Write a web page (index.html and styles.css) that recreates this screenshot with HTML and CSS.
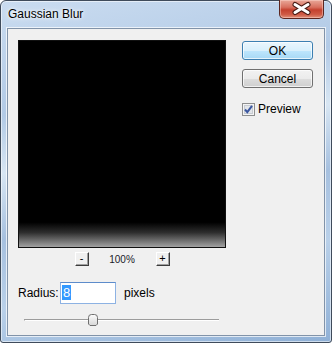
FILE: index.html
```html
<!DOCTYPE html>
<html lang="en">
<head>
    <meta charset="UTF-8">
    <title>Gaussian Blur</title>
    <link rel="stylesheet" href="styles.css">
</head>
<body>
    <div class="window">
        <div class="titlebar">
            <span class="title">Gaussian Blur</span>
            <div class="close">
                <svg width="43" height="17" viewBox="0 0 43 17">
                    <path d="M15 4.5 L28 12.5 M15 12.5 L28 4.5" stroke="#4a1c15" stroke-width="5" stroke-linecap="round"/>
                    <path d="M15 4.5 L28 12.5 M15 12.5 L28 4.5" stroke="#fff" stroke-width="3" stroke-linecap="round"/>
                </svg>
            </div>
        </div>
        <div class="client">
            <div class="main">
                <div class="preview"></div>
                <div class="zoom-row">
                    <span class="zoom-btn">-</span>
                    <span class="zoom-label">100%</span>
                    <span class="zoom-btn">+</span>
                </div>
                <div class="radius-row">
                    <span class="radius-label">Radius:</span>
                    <div class="field"><span class="sel">8</span></div>
                    <span class="unit">pixels</span>
                </div>
                <div class="slider">
                    <div class="track"></div>
                    <svg class="thumb" width="10" height="12" viewBox="0 0 10 12">
                        <defs>
                            <linearGradient id="tg" x1="0" y1="0" x2="0" y2="1">
                                <stop offset="0" stop-color="#fdfdfd"/>
                                <stop offset="1" stop-color="#d6d6d6"/>
                            </linearGradient>
                        </defs>
                        <path d="M0.5 3.5 Q0.5 0.5 3.5 0.5 H6.5 Q9.5 0.5 9.5 3.5 V10 L8 11.5 H2 L0.5 10 Z" fill="url(#tg)" stroke="#6f6f6f"/>
                    </svg>
                </div>
            </div>
            <div class="side">
                <button class="btn default">OK</button>
                <button class="btn">Cancel</button>
                <div class="check">
                    <svg width="13" height="13" viewBox="0 0 13 13">
                        <rect x="0.5" y="0.5" width="12" height="12" fill="#f4f4f4" stroke="#8e8f8f"/>
                        <rect x="2.5" y="2.5" width="8" height="8" fill="#e3e6ea" stroke="#c8ccd3"/>
                        <path d="M3 6.5 L5.3 9.2 L10 2.8" fill="none" stroke="#3b57a0" stroke-width="2"/>
                    </svg>
                    <span>Preview</span>
                </div>
            </div>
        </div>
    </div>
</body>
</html>
```

FILE: styles.css
```css
html, body {
    margin: 0;
    padding: 0;
}
body {
    width: 332px;
    height: 343px;
    overflow: hidden;
    font-family: "Liberation Sans", Arial, sans-serif;
    font-size: 12px;
    color: #000;
}
.window {
    box-sizing: border-box;
    width: 332px;
    height: 343px;
    border: 1px solid #3f4b5b;
    border-radius: 6px 6px 3px 3px;
    background: linear-gradient(168deg, #cadcf0 0%, #b2cae6 28%, #d8e6f3 42%, #a6c0df 58%, #b9d0e9 75%, #8fb0d6 100%);
    box-shadow: inset 0 0 0 1px rgba(255, 255, 255, 0.55);
    display: flex;
    flex-direction: column;
}
.titlebar {
    height: 27px;
    display: flex;
    align-items: flex-start;
    justify-content: space-between;
}
.title {
    margin: 6px 0 0 7px;
    line-height: 14px;
    text-shadow: 0 0 6px #fff, 0 0 3px #fff;
}
.close {
    box-sizing: border-box;
    width: 45px;
    height: 19px;
    margin: -1px 7px 0 0;
    border: 1px solid #5c2620;
    border-top: none;
    border-radius: 0 0 5px 5px;
    background: linear-gradient(to bottom, #e9a899 0%, #d8705f 40%, #c4412f 55%, #cf5a45 80%, #e0907a 100%);
    box-shadow: inset 0 0 0 1px rgba(255, 220, 210, 0.45);
}
.close svg {
    display: block;
}
.client {
    flex: 1;
    margin: 0 6px 6px 6px;
    border: 1px solid #8193a9;
    box-shadow: 0 0 0 1px rgba(255, 255, 255, 0.7);
    background: #f0f0f0;
    display: flex;
    padding: 11px 10px 0 10px;
}
.main {
    width: 208px;
    display: flex;
    flex-direction: column;
}
.preview {
    box-sizing: border-box;
    width: 208px;
    height: 208px;
    border: 1px solid #111;
    background: linear-gradient(to bottom, #000 0%, #000 88%, #2e2e2e 93%, #a2a2a2 100%);
}
.zoom-row {
    margin-top: 4px;
    display: flex;
    justify-content: center;
    align-items: center;
    height: 14px;
}
.zoom-btn {
    box-sizing: border-box;
    width: 14px;
    height: 14px;
    background: #f0f0f0;
    border-top: 1px solid #fff;
    border-left: 1px solid #fff;
    border-right: 1px solid #3c3c3c;
    border-bottom: 1px solid #3c3c3c;
    box-shadow: inset -1px -1px 0 #a0a0a0;
    font-size: 11px;
    line-height: 11px;
    text-align: center;
}
.zoom-label {
    width: 67px;
    text-align: center;
    font-size: 10px;
    color: #1a1a2a;
}
.radius-row {
    margin-top: 16px;
    display: flex;
    align-items: center;
    height: 22px;
}
.radius-label {
    width: 42px;
}
.field {
    box-sizing: border-box;
    width: 56px;
    height: 22px;
    border: 1px solid #8db2e3;
    border-top-color: #5d8ccb;
    background: #fff;
    padding: 2px 0 0 1px;
    margin-right: 8px;
}
.sel {
    display: inline-block;
    background: #3399ff;
    color: #fff;
    font-size: 13px;
    line-height: 15px;
    padding: 0 1px;
}
.slider {
    position: relative;
    margin: 10px 0 0 6px;
    width: 195px;
    height: 12px;
}
.track {
    margin-top: 5px;
    height: 0;
    border-top: 1px solid #9c9c9c;
    border-bottom: 1px solid #fff;
    border-left: 1px solid #9c9c9c;
}
.thumb {
    position: absolute;
    top: 0;
    left: 64px;
}
.side {
    margin-left: 16px;
    width: 71px;
    padding-top: 1px;
    display: flex;
    flex-direction: column;
}
.btn {
    box-sizing: border-box;
    width: 71px;
    height: 19px;
    margin: 0 0 9px 0;
    padding: 0;
    font-family: "Liberation Sans", Arial, sans-serif;
    font-size: 12px;
    color: #000;
    border: 1px solid #707070;
    border-radius: 3px;
    background: linear-gradient(to bottom, #f2f2f2 0%, #ebebeb 50%, #dddddd 51%, #cfcfcf 100%);
    box-shadow: inset 0 0 0 1px rgba(255, 255, 255, 0.7);
}
.btn.default {
    border-color: #3c7fb1;
    background: linear-gradient(to bottom, #eaf6fd 0%, #d9f0fc 50%, #bee6fd 51%, #a7d9f5 100%);
}
.check {
    margin-top: 5px;
    display: flex;
    align-items: center;
    gap: 3px;
}
.check svg {
    display: block;
}
```
